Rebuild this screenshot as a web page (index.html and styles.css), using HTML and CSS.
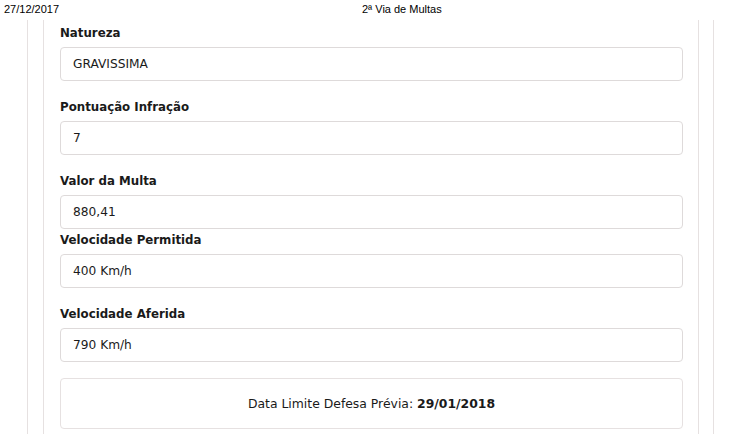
FILE: index.html
```html
<!DOCTYPE html>
<html lang="pt-BR">
<head>
<meta charset="utf-8">
<title>2ª Via de Multas</title>
<link rel="stylesheet" href="styles.css">
</head>
<body>
<div class="print-header">
  <span class="ph-date">27/12/2017</span>
  <span class="ph-title">2ª Via de Multas</span>
</div>
<div class="outer">
  <div class="inner">
    <div class="group">
      <div class="label">Natureza</div>
      <div class="field">GRAVISSIMA</div>
    </div>
    <div class="group">
      <div class="label">Pontuação Infração</div>
      <div class="field">7</div>
    </div>
    <div class="group tight">
      <div class="label">Valor da Multa</div>
      <div class="field">880,41</div>
    </div>
    <div class="group">
      <div class="label">Velocidade Permitida</div>
      <div class="field">400 Km/h</div>
    </div>
    <div class="group last">
      <div class="label">Velocidade Aferida</div>
      <div class="field">790 Km/h</div>
    </div>
    <div class="notice">Data Limite Defesa Prévia: <strong>29/01/2018</strong></div>
  </div>
</div>
</body>
</html>
```

FILE: styles.css
```css
html, body {
  margin: 0;
  padding: 0;
  background: #fff;
}
body {
  font-family: "DejaVu Sans", Verdana, sans-serif;
  font-size: 12px;
  color: #1a1a1a;
  width: 734px;
  height: 434px;
  overflow: hidden;
}
.print-header {
  display: grid;
  grid-template-columns: 358px auto;
  height: 20px;
  padding: 2px 4px 0;
  box-sizing: border-box;
  font-family: "Liberation Sans", Arial, sans-serif;
  font-size: 11px;
  color: #000;
  line-height: 14px;
}
.outer {
  margin-left: 27px;
  width: 687px;
  box-sizing: border-box;
  border-left: 1px solid #e6e1e1;
  border-right: 1px solid #e6e1e1;
  padding: 0 14px 0 15px;
  height: 414px;
}
.inner {
  border-left: 1px solid #e6e1e1;
  border-right: 1px solid #e6e1e1;
  height: 100%;
  box-sizing: border-box;
  padding: 4px 15px 0 16px;
}
.group {
  margin-bottom: 17px;
}
.group.tight {
  margin-bottom: 2px;
}
.group.last {
  margin-bottom: 16px;
}
.label {
  font-weight: bold;
  font-size: 11.8px;
  line-height: 18px;
  margin-bottom: 5px;
}
.field {
  height: 34px;
  box-sizing: border-box;
  border: 1px solid #dedada;
  border-radius: 4px;
  padding-left: 12px;
  line-height: 32px;
  font-size: 12.2px;
}
.notice {
  height: 51px;
  box-sizing: border-box;
  border: 1px solid #e6e1e1;
  border-radius: 4px;
  text-align: center;
  line-height: 49px;
  font-size: 12.4px;
}
.notice strong {
  font-weight: bold;
}
```
